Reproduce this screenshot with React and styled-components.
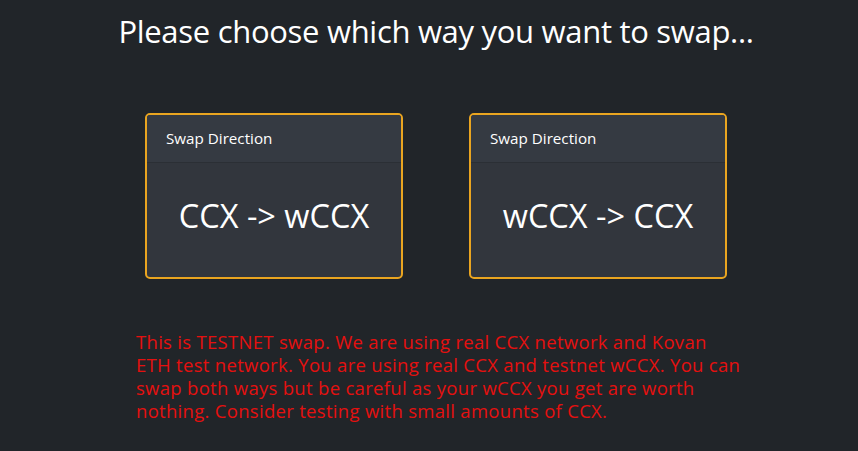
import React from "react";
import styled, { createGlobalStyle } from "styled-components";

const GlobalStyle = createGlobalStyle`
  html, body {
    margin: 0;
    padding: 0;
    background: #212529;
  }
  body {
    font-family: "Open Sans", "Noto Sans", sans-serif;
    color: #fff;
  }
`;

const directions = [
  { id: "toEth", label: "CCX -> wCCX" },
  { id: "toCcx", label: "wCCX -> CCX" },
];

const App = () => {
  return (
    <>
      <GlobalStyle />
      <Page>
        <Title>Please choose which way you want to swap...</Title>
        <CardRow>
          {directions.map((dir) => (
            <DirectionCard key={dir.id}>
              <CardHeader>Swap Direction</CardHeader>
              <CardBody>{dir.label}</CardBody>
            </DirectionCard>
          ))}
        </CardRow>
        <Warning>
          This is TESTNET swap. We are using real CCX network and Kovan ETH
          test network. You are using real CCX and testnet wCCX. You can swap
          both ways but be careful as your wCCX you get are worth nothing.
          Consider testing with small amounts of CCX.
        </Warning>
      </Page>
    </>
  );
};

export default App;

const Page = styled.div`
  min-height: 451px;
  box-sizing: border-box;
  padding: 9px 0 0 14px;
  display: flex;
  flex-direction: column;
  align-items: center;
`;

const Title = styled.h1`
  margin: 0;
  font-size: 31px;
  font-weight: 400;
  line-height: 44px;
  letter-spacing: -0.3px;
`;

const CardRow = styled.div`
  display: flex;
  gap: 66px;
  margin-top: 60px;
`;

const DirectionCard = styled.div`
  width: 258px;
  height: 166px;
  box-sizing: border-box;
  border: 2px solid #eaa520;
  border-radius: 5px;
  background: #32363d;
  display: flex;
  flex-direction: column;
  overflow: hidden;
  cursor: pointer;
`;

const CardHeader = styled.div`
  height: 48px;
  box-sizing: border-box;
  padding: 0 19px 2px;
  display: flex;
  align-items: center;
  font-size: 15.2px;
  background: #353a42;
  border-bottom: 1px solid #2b2f35;
`;

const CardBody = styled.div`
  flex: 1;
  display: flex;
  align-items: center;
  justify-content: center;
  font-size: 32.5px;
  padding-bottom: 9px;
`;

const Warning = styled.p`
  width: 608px;
  margin: 51px 0 0 8px;
  color: #e5100f;
  font-size: 18.5px;
  line-height: 23px;
  letter-spacing: 0.3px;
`;
